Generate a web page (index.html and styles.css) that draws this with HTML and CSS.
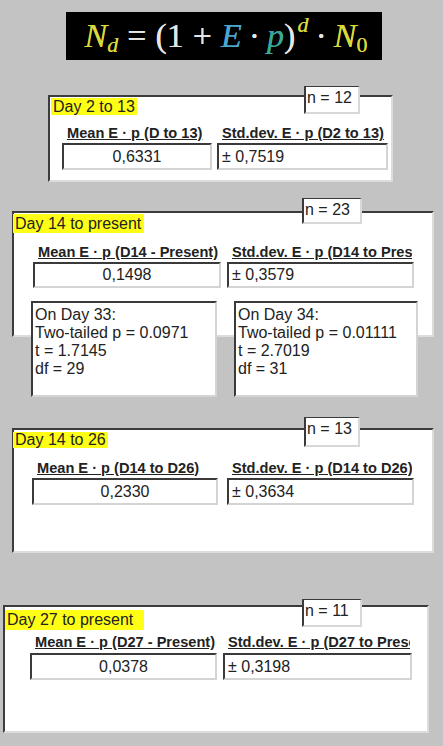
FILE: index.html
```html
<!DOCTYPE html>
<html>
<head>
<meta charset="utf-8">
<link rel="stylesheet" href="styles.css">
</head>
<body>
<div class="page">
  <div class="formula">
    <span class="y it">N</span><sub class="y it">d</sub><span class="w op">=</span><span class="w">(1</span><span class="w op">+</span><span class="b it">E</span><span class="w dot">·</span><span class="t it">p</span><span class="w">)</span><sup class="y it">d</sup><span class="w dot">·</span><span class="y it">N</span><sub class="y">0</sub>
  </div>

  <section class="panel p1">
    <div class="count">n = 12</div>
    <div class="title">Day 2 to 13</div>
    <div class="cols">
      <div class="col c1"><div class="lbl">Mean E · p (D to 13)</div><div class="val center">0,6331</div></div>
      <div class="col c2"><div class="lbl">Std.dev. E · p (D2 to 13)</div><div class="val">± 0,7519</div></div>
    </div>
  </section>

  <section class="panel p2">
    <div class="count">n = 23</div>
    <div class="title">Day 14 to present</div>
    <div class="cols">
      <div class="col c1"><div class="lbl">Mean E · p (D14 - Present)</div><div class="val center">0,1498</div></div>
      <div class="col c2"><div class="lbl">Std.dev. E · p (D14 to Present)</div><div class="val">± 0,3579</div></div>
    </div>
    <div class="notes">
      <div class="note n1">On Day 33:<br>Two-tailed p = 0.0971<br>t = 1.7145<br>df = 29</div>
      <div class="note n2">On Day 34:<br>Two-tailed p = 0.01111<br>t = 2.7019<br>df = 31</div>
    </div>
  </section>

  <section class="panel p3">
    <div class="count">n = 13</div>
    <div class="title">Day 14 to 26</div>
    <div class="cols">
      <div class="col c1"><div class="lbl">Mean E · p (D14 to D26)</div><div class="val center">0,2330</div></div>
      <div class="col c2"><div class="lbl">Std.dev. E · p (D14 to D26)</div><div class="val">± 0,3634</div></div>
    </div>
  </section>

  <section class="panel p4">
    <div class="count">n = 11</div>
    <div class="title">Day 27 to present</div>
    <div class="cols">
      <div class="col c1"><div class="lbl">Mean E · p (D27 - Present)</div><div class="val center">0,0378</div></div>
      <div class="col c2"><div class="lbl">Std.dev. E · p (D27 to Present)</div><div class="val">± 0,3198</div></div>
    </div>
  </section>
</div>
</body>
</html>
```

FILE: styles.css
```css
html, body {
  margin: 0;
  padding: 0;
  background: #c3c3c3;
}
body {
  font-family: "Liberation Sans", Arial, sans-serif;
  color: #222;
  width: 443px;
  height: 746px;
  overflow: hidden;
}
.page {
  display: flex;
  flex-direction: column;
  align-items: flex-start;
}

/* formula */
.formula {
  margin: 12px 0 0 66px;
  width: 316px;
  height: 48px;
  box-sizing: border-box;
  background: #000;
  font-family: "Liberation Serif", "Times New Roman", serif;
  font-size: 34px;
  line-height: 48px;
  display: flex;
  align-items: baseline;
  justify-content: center;
  padding: 0 0 0 4px;
  white-space: nowrap;
  text-shadow: 0 0 0.6px currentColor;
}
.formula .it { font-style: italic; }
.formula .y { color: #d8d83c; }
.formula .w { color: #e6e6e6; }
.formula .b { color: #4aa6cf; }
.formula .t { color: #38a898; }
.formula sub { font-size: 22px; line-height: 0; position: relative; top: 5px; vertical-align: baseline; }
.formula sup { font-size: 22px; line-height: 0; position: relative; top: -15px; vertical-align: baseline; margin-left: 2px; }
.formula .op { margin: 0 9px; }
.formula .dot { margin: 0 7px; }

/* panels */
.panel {
  position: relative;
  box-sizing: border-box;
  background: #fff;
  border: 2px solid;
  border-color: #3c3c3c #dcdcdc #dcdcdc #3c3c3c;
}
.count {
  position: absolute;
  box-sizing: border-box;
  background: #fff;
  border: 2px solid;
  border-color: #3a3a3a #d8d8d8 #d8d8d8 #3a3a3a;
  border-top-width: 1px;
  font-size: 16px;
  line-height: 22px;
  padding-left: 1px;
  white-space: nowrap;
}
.title {
  align-self: flex-start;
  background: #ffff16;
  font-size: 16px;
  white-space: nowrap;
  padding: 0 2px;
}
.cols {
  display: flex;
}
.col {
  display: flex;
  flex-direction: column;
}
.lbl {
  font-size: 14.6px;
  font-weight: bold;
  text-decoration: underline;
  line-height: 16px;
  height: 16px;
  white-space: nowrap;
  overflow: hidden;
  margin: 0 2px 0 5px;
  color: #222;
}
.val {
  box-sizing: border-box;
  background: #fff;
  border: 2px solid;
  border-color: #3a3a3a #d4d4d4 #d4d4d4 #3a3a3a;
  font-size: 16px;
  padding-left: 3px;
  white-space: nowrap;
  overflow: hidden;
}
.val.center {
  text-align: center;
  padding-left: 0;
}
.notes {
  display: flex;
}
.note {
  box-sizing: border-box;
  background: #fff;
  border: 2px solid;
  border-color: #3a3a3a #d4d4d4 #d4d4d4 #3a3a3a;
  font-size: 16px;
  line-height: 18px;
  padding: 3px 0 0 2px;
  height: 96px;
  white-space: nowrap;
  overflow: hidden;
}

/* panel 1 */
.p1 { margin: 35px 0 0 48px; width: 345px; height: 87px; }
.p1 .count { left: 254px; top: -11px; width: 56px; height: 28px; }
.p1 .title { margin: 1px 0 0 1px; line-height: 17px; display: inline-block; }
.p1 .cols { margin: 9px 0 0 12px; gap: 5px; }
.p1 .c1 { width: 150px; }
.p1 .c2 { width: 171px; }
.p1 .val { margin-top: 2px; height: 27px; line-height: 23px; }

/* panel 2 */
.p2 { margin: 29px 0 0 12px; width: 422px; height: 126px; }
.p2 .count { left: 288px; top: -15px; width: 60px; height: 26px; }
.p2 .title { margin: 1px 0 0 -1px; line-height: 19px; display: inline-block; padding: 0 3px 0 2px; }
.p2 .cols { margin: 11px 0 0 19px; gap: 6px; }
.p2 .c1 { width: 188px; }
.p2 .c2 { width: 187px; }
.p2 .val { margin-top: 2px; height: 26px; line-height: 22px; }
.p2 .notes { margin: 13px 0 0 17px; gap: 17px; }
.p2 .n1 { width: 186px; }
.p2 .n2 { width: 184px; }

/* panel 3 */
.p3 { margin: 91px 0 0 12px; width: 422px; height: 125px; }
.p3 .count { left: 290px; top: -13px; width: 56px; height: 30px; }
.p3 .title { margin: 2px 0 0 -1px; line-height: 16px; display: inline-block; padding: 0 2px 0 2px; }
.p3 .cols { margin: 11px 0 0 18px; gap: 9px; }
.p3 .c1 { width: 186px; }
.p3 .c2 { width: 187px; }
.p3 .val { margin-top: 2px; height: 27px; line-height: 23px; }

/* panel 4 */
.p4 { margin: 52px 0 0 3px; width: 426px; height: 128px; }
.p4 .count { left: 297px; top: -8px; width: 60px; height: 28px; }
.p4 .title { margin: 3px 0 0 0; line-height: 20px; display: inline-block; padding: 0 11px 0 2px; }
.p4 .cols { margin: 4px 0 0 25px; gap: 6px; }
.p4 .c1 { width: 187px; }
.p4 .c2 { width: 189px; }
.p4 .val { margin-top: 3px; height: 27px; line-height: 23px; }
```
